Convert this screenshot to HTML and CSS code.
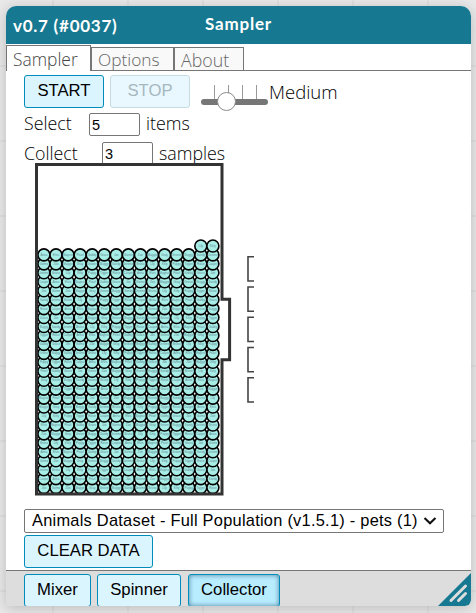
FILE: index.html
```
<!DOCTYPE html>
<html lang="en">
<head>
<meta charset="utf-8">
<title>Sampler</title>
<link rel="stylesheet" href="styles.css">
</head>
<body>
<main class="window">
  <header class="titlebar"><span class="version">v0.7 (#0037)</span><h1 class="title">Sampler</h1></header>
  <nav class="tabs">
    <a class="tab active"><span>Sampler</span></a><a class="tab options"><span>Options</span></a><a class="tab about"><span>About</span></a>
  </nav>
  <section class="content">
    <div class="controls">
      <button class="btn start">START</button>
      <button class="btn stop" disabled>STOP</button>
      <svg class="slider" width="68" height="36" viewBox="0 0 68 36">
        <path d="M13.5 10V24M27.5 10V24M41.5 10V24M55.5 10V24" stroke="#999" fill="none"/>
        <rect x="0" y="24" width="67" height="6" rx="3" fill="#767676"/>
        <circle cx="25.5" cy="26.5" r="9" fill="#fff" stroke="#8a8a8a"/>
      </svg>
      <span class="speed">Medium</span>
    </div>
    <div class="row select-row"><span class="word">Select</span><input class="num" value="5"><span class="after">items</span></div>
    <div class="row collect-row"><span class="word">Collect</span><input class="num" value="3"><span class="after">samples</span></div>
    <svg class="model" id="model" width="232" height="334" viewBox="24 163 232 334">
      <g id="balls"></g>
      <path d="M36.5 164.5H222V299.3H229.6V359.8H222V494H36.5Z" fill="none" stroke="#333" stroke-width="3"/>
      <g id="slots" fill="none" stroke="#444" stroke-width="1.6"></g>
    </svg>
    <div class="dataset"><span>Animals Dataset - Full Population (v1.5.1) - pets (1)</span>
      <svg width="14" height="10" viewBox="0 0 14 10"><path d="M1.5 2L7 7.3L12.5 2" fill="none" stroke="#111" stroke-width="2.1"/></svg>
    </div>
    <button class="btn clear">CLEAR DATA</button>
  </section>
  <footer class="devices">
    <button class="btn mixer">Mixer</button><button class="btn spinner">Spinner</button><button class="btn collector">Collector</button>
  </footer>
  <svg class="grip" width="33" height="33" viewBox="0 0 33 33">
    <path d="M33 0V27Q33 33 27 33H0Z" fill="#177991"/>
    <path d="M13 27.5L27.5 13M20.5 27.5L27.5 20.5" stroke="#ddd" stroke-width="3" stroke-linecap="round"/>
  </svg>
</main>
<script src="balls.js"></script>
</body>
</html>
```
FILE: styles.css
```
* { box-sizing: border-box; }
body {
  margin: 0;
  width: 476px;
  height: 613px;
  overflow: hidden;
  padding: 6px 0 0 6px;
  background-color: #e9e9e9;
  background-image: linear-gradient(#e1e1e1 2px, transparent 2px), linear-gradient(90deg, #e1e1e1 2px, transparent 2px);
  background-size: 75px 75px;
  background-position: 52px 65px;
  font-family: "Open Sans", "Noto Sans", sans-serif;
  color: #000;
}
.window {
  position: relative;
  display: flex;
  flex-direction: column;
  width: 465px;
  height: 600px;
  background: #fff;
  border-radius: 10px 10px 6px 0;
  box-shadow: 0 2px 14px rgba(0, 0, 0, .2);
  overflow: hidden;
}
.titlebar {
  display: grid;
  grid-template-columns: 1fr auto 1fr;
  flex: none;
  height: 38px;
  background: #177991;
  color: #fff;
  font: 700 17px/36px Lato, sans-serif;
  letter-spacing: .8px;
}
.version { padding: 3px 0 0 7px; line-height: 34px; letter-spacing: .75px; }
.title { margin: 0; font: inherit; }
.tabs { display: flex; align-items: flex-end; flex: none; height: 27px; padding-bottom: 0; border-bottom: 1px solid #767676; }
.tab {
  height: 23px;
  border: 1px solid #767676;
  border-bottom: 0;
  background: #f9f9f9;
  color: #666;
  font-size: 18.4px;
  font-weight: 350;
  line-height: 24px;
  padding-left: 6px;
}
.active { height: 26px; width: 85px; margin-bottom: -1px; background: #fff; color: #444; line-height: 26px; font-size: 17.4px; }
.options { width: 83px; font-size: 17.3px; }
.about { width: 70px; font-size: 17.8px; }
.content { flex: none; height: 499px; padding: 4px 0 0 18px; }
.controls { display: flex; height: 33px; }
.btn {
  height: 33px;
  padding: 0 0 2px;
  border: 1px solid #008cba;
  border-radius: 3px;
  background: #dbf5ff;
  color: #000;
  font: 16.7px/29px "Liberation Sans", Arial, sans-serif;
}
.start { width: 80px; }
.stop { width: 80px; margin-left: 6px; background: #e9f7fe; border-color: #c5dce3; color: #a6b8bf; }
.slider { margin-left: 11px; flex: none; }
.speed { font-size: 18.5px; font-weight: 350; line-height: 34px; }
.row { display: flex; height: 30px; font-size: 17.8px; font-weight: 350; line-height: 30px; }
.select-row { padding-top: 1px; }
.word { width: 65px; line-height: 29px; }
.num {
  width: 51px;
  height: 23px;
  margin-top: 4px;
  padding: 1px 2px;
  border: 1px solid #767676;
  border-radius: 2px;
  background: #fff;
  font: 14.5px "Liberation Sans", Arial, sans-serif;
}
.after { margin-left: 6px; line-height: 29px; }
.collect-row { height: 25px; }
.collect-row .word { width: 78px; line-height: 31px; }
.collect-row .after { line-height: 31px; }
.model { display: block; }
.dataset {
  display: flex;
  align-items: center;
  justify-content: space-between;
  width: 420px;
  height: 24px;
  margin-top: 12px;
  padding: 0 6px 1px 7px;
  border: 1px solid #767676;
  border-radius: 2px;
  font: 16.4px "Liberation Sans", Arial, sans-serif;
  letter-spacing: .25px;
  white-space: nowrap;
}
.clear { display: block; width: 129px; margin-top: 2px; padding-bottom: 3px; }
.devices { display: flex; flex: 1; gap: 6px; padding: 3px 0 0 18px; background: #ddd; border-top: 1px solid #767676; overflow: hidden; }
.devices .btn { flex: none; padding-bottom: 4px; }
.mixer { width: 67px; }
.spinner { width: 84px; }
.devices .collector { width: 92px; margin-left: 1px; background: #b8ecff; box-shadow: inset 0 0 5px rgba(0, 60, 90, .6); }
.grip { position: absolute; right: 0; bottom: 0; }
.ball { fill: #a8eee6; stroke: #000; stroke-width: 1.6; }
.ball-name { font: 3px "Liberation Sans", sans-serif; fill: #5f8994; text-anchor: middle; }
```
FILE: balls.js
```
const NS = "http://www.w3.org/2000/svg";
const names = ["Anna", "Elvis", "Magnus", "Pearl", "Gabby", "Grace", "Joe", "Gizmo", "Zoe", "Maggie", "Gray", "Grover", "Buggy", "Sandy", "Jerome", "Bruno", "Lily", "Kitty", "Puppy", "Tigger", "Rosie", "Casper"];
const balls = document.getElementById("balls");
const slots = document.getElementById("slots");

function add(parent, tag, attrs, text) {
  const el = document.createElementNS(NS, tag);
  for (const key in attrs) el.setAttribute(key, attrs[key]);
  if (text) el.textContent = text;
  parent.appendChild(el);
}

// Stack from the floor up so each row overlaps the one beneath it.
for (let row = 26; row >= -1; row--) {
  for (let col = row < 0 ? 13 : 0; col < 15; col++) {
    const x = 43.9 + col * 12.07;
    const y = 254.9 + row * 8.95;
    add(balls, "circle", { class: "ball", cx: x, cy: y, r: 6 });
    add(balls, "text", { class: "ball-name", x: x, y: y + 1 }, names[(Math.max(row, 0) * 7 + col + (row < 0 ? 3 : 0)) % names.length]);
  }
}

for (let i = 0; i < 5; i++) {
  add(slots, "path", { d: `M254 ${256.7 + i * 30.25}H248V${281 + i * 30.25}H254` });
}
```
